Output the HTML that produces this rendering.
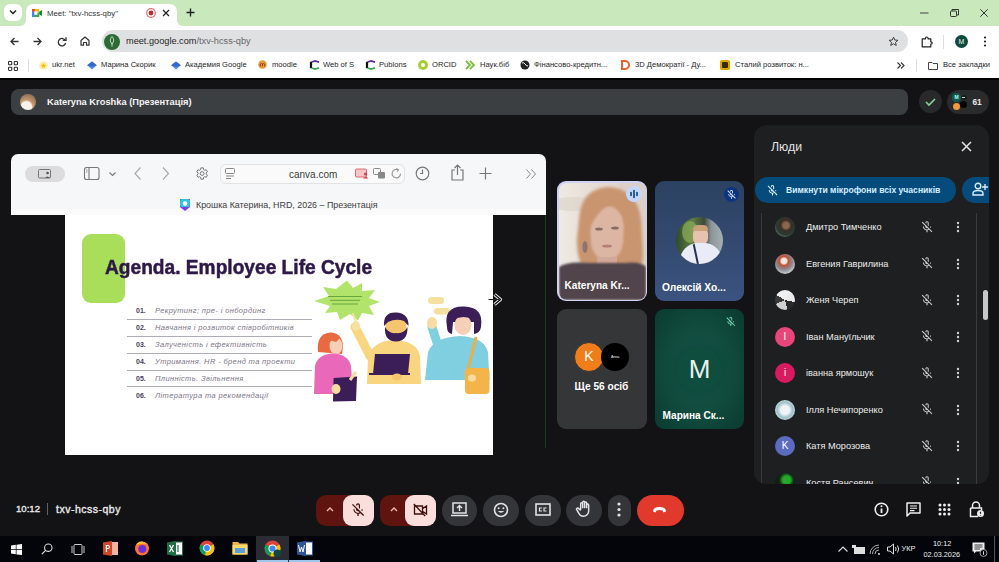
<!DOCTYPE html>
<html><head><meta charset="utf-8">
<style>
*{box-sizing:border-box;margin:0;padding:0}
html,body{width:999px;height:562px;overflow:hidden;background:#131316;font-family:"Liberation Sans",sans-serif}
.a{position:absolute}
svg{position:absolute;overflow:visible}
#tabs{left:0;top:0;width:999px;height:26px;background:#c9e8bc}
#toolbar{left:0;top:26px;width:999px;height:53px;background:#fff}
#meet{left:0;top:80px;width:999px;height:456px;background:#131316}
#taskbar{left:0;top:536px;width:999px;height:26px;background:#03050b}
.bm{position:absolute;top:60px;font-size:7.6px;color:#262626;white-space:nowrap;line-height:10px}
.ag{position:absolute;left:136px;font-size:7.5px;line-height:9px;white-space:nowrap;color:#7a7484}
.ag b{display:inline-block;width:19px;color:#4a3d5c;font-style:normal;font-size:7px}
.ag i{font-style:italic;letter-spacing:0.37px}
.av{position:absolute;left:21px;width:20px;height:20px;border-radius:50%;color:#fff;font-size:10px;text-align:center;line-height:20px}
.pn{position:absolute;left:52px;font-size:9.2px;color:#ededed;white-space:nowrap;line-height:12px}
.mo{left:165.5px}
.dt{left:202px}
.cb{position:absolute;top:494.5px;height:31px;background:#333538;border-radius:16px}
</style></head><body>
<!-- TAB STRIP -->
<div id="tabs" class="a"></div>
<div class="a" style="left:26px;top:4px;width:151px;height:24px;background:#fff;border-radius:7px 7px 0 0"></div>
<div class="a" style="left:20px;top:20px;width:6px;height:6px;background:#fff"></div>
<div class="a" style="left:14px;top:14px;width:12px;height:12px;background:#c9e8bc;border-radius:50%"></div>
<div class="a" style="left:177px;top:20px;width:6px;height:6px;background:#fff"></div>
<div class="a" style="left:177px;top:14px;width:12px;height:12px;background:#c9e8bc;border-radius:50%"></div>
<div class="a" style="left:4px;top:4px;width:18px;height:17px;background:#fff;border-radius:6px"></div>
<svg style="left:9px;top:9px" width="8" height="6"><path d="M1 1.5 L4 4.5 L7 1.5" stroke="#222" stroke-width="1.5" fill="none"/></svg>

<!-- meet icon -->
<svg style="left:31.5px;top:9px" width="10" height="8" viewBox="0 0 11 9">
<rect x="0" y="0" width="8" height="9" rx="1" fill="#fbbc04"/>
<rect x="0" y="4.5" width="8" height="4.5" fill="#34a853"/>
<rect x="0" y="0" width="2.5" height="9" fill="#4285f4"/>
<path d="M0 0 H3 V3 H0 Z" fill="#ea4335"/>
<rect x="2.5" y="2.5" width="3.5" height="4" fill="#fff"/>
<path d="M8 3 L11 1 V8 L8 6 Z" fill="#00832d"/>
</svg>
<div class="a" style="left:47px;top:7.5px;font-size:7.8px;color:#333;white-space:nowrap;line-height:11px">Meet: "txv-hcss-qby"</div>
<svg style="left:145px;top:7px" width="12" height="12"><circle cx="6" cy="6" r="4.3" fill="none" stroke="#e07070" stroke-width="1.2"/><circle cx="6" cy="6" r="2.4" fill="#b53030"/></svg>
<svg style="left:162px;top:9px" width="8" height="8"><path d="M1 1 L7 7 M7 1 L1 7" stroke="#222" stroke-width="1.3"/></svg>
<svg style="left:186px;top:8px" width="9" height="9"><path d="M4.5 0.5 V8.5 M0.5 4.5 H8.5" stroke="#222" stroke-width="1.4"/></svg>
<!-- window controls -->
<svg style="left:920px;top:12px" width="9" height="2"><path d="M0 1 H8.5" stroke="#444" stroke-width="1"/></svg>
<svg style="left:950px;top:9px" width="9" height="8"><rect x="0.5" y="2" width="6" height="5.5" rx="0.8" fill="none" stroke="#333" stroke-width="1"/><path d="M2 2 V0.5 H8.5 V6 H6.5" fill="none" stroke="#333" stroke-width="1"/></svg>
<svg style="left:980px;top:9px" width="8" height="8"><path d="M0.3 0.3 L7.7 7.7 M7.7 0.3 L0.3 7.7" stroke="#333" stroke-width="1"/></svg>

<!-- TOOLBAR -->
<div id="toolbar" class="a"></div>
<svg style="left:10px;top:37px" width="9" height="9"><path d="M8.5 4.5 H1.2 M4.5 1 L1 4.5 L4.5 8" stroke="#333" stroke-width="1.3" fill="none"/></svg>
<svg style="left:33px;top:37px" width="9" height="9"><path d="M0.5 4.5 H7.8 M4.5 1 L8 4.5 L4.5 8" stroke="#333" stroke-width="1.3" fill="none"/></svg>
<svg style="left:56.5px;top:36.5px" width="10" height="10"><path d="M8.3 3.5 A3.7 3.7 0 1 0 8.6 6" stroke="#333" stroke-width="1.3" fill="none"/><path d="M5.8 3.3 H9 V0.3" stroke="#333" stroke-width="1.3" fill="none"/></svg>
<svg style="left:80px;top:36px" width="10" height="10"><path d="M1 4.5 L5 1 L9 4.5 V9.2 H6.5 V6.5 H3.5 V9.2 H1 Z" stroke="#333" stroke-width="1.2" fill="none" stroke-linejoin="round"/></svg>
<div class="a" style="left:102px;top:30px;width:806px;height:22px;background:#dfe0e2;border-radius:11px"></div>
<div class="a" style="left:104px;top:33.5px;width:16px;height:16px;background:#2c6b35;border-radius:50%"></div>
<svg style="left:108px;top:36px" width="8" height="11"><path d="M4 0.5 C6 3 6.5 5 4 8 C1.5 5 2 3 4 0.5 Z M4 8 V10.5" stroke="#cfe6c6" stroke-width="1" fill="none"/></svg>
<div class="a" style="left:126px;top:36px;font-size:9.2px;color:#1f1f1f;white-space:nowrap;line-height:11px">meet.google.com<span style="color:#666">/txv-hcss-qby</span></div>
<svg style="left:888px;top:36px" width="11" height="11" viewBox="0 0 24 24"><path d="M12 2.5 L14.8 8.8 L21.6 9.4 L16.4 13.9 L18 20.6 L12 17 L6 20.6 L7.6 13.9 L2.4 9.4 L9.2 8.8 Z" fill="none" stroke="#333" stroke-width="2"/></svg>
<svg style="left:921px;top:35.5px" width="12" height="12" viewBox="0 0 12 12"><path d="M1.2 2.8 H4.5 Q4.5 1 5.8 1 Q7.1 1 7.1 2.8 H9.8 V5.8 Q11.2 5.8 11.2 7 Q11.2 8.2 9.8 8.2 V10.8 H1.2 Z" fill="none" stroke="#222" stroke-width="1.2" stroke-linejoin="round"/></svg>
<div class="a" style="left:943px;top:35px;width:1px;height:14px;background:#ddd"></div>
<div class="a" style="left:955px;top:35px;width:13px;height:13px;background:#0d4a3e;border-radius:50%;color:#e8f0ec;font-size:7px;text-align:center;line-height:13px">M</div>
<svg style="left:983px;top:36px" width="4" height="12"><circle cx="2" cy="1.5" r="1.1" fill="#222"/><circle cx="2" cy="5.5" r="1.1" fill="#222"/><circle cx="2" cy="9.5" r="1.1" fill="#222"/></svg>

<!-- BOOKMARKS -->
<svg style="left:8px;top:60.5px" width="10" height="10"><g fill="none" stroke="#333" stroke-width="1.1"><rect x="0.55" y="0.55" width="3.2" height="3.2" rx="0.6"/><rect x="6.25" y="0.55" width="3.2" height="3.2" rx="0.6"/><rect x="0.55" y="6.25" width="3.2" height="3.2" rx="0.6"/><rect x="6.25" y="6.25" width="3.2" height="3.2" rx="0.6"/></g></svg>
<div class="a" style="left:28px;top:59px;width:1px;height:13px;background:#ddd"></div>
<svg style="left:39px;top:60.5px" width="9" height="9"><circle cx="4.5" cy="4.5" r="4.3" fill="#fbeeb0"/><path d="M4.5 1.8 L5.3 3.8 L7.4 3.9 L5.8 5.2 L6.3 7.2 L4.5 6.1 L2.7 7.2 L3.2 5.2 L1.6 3.9 L3.7 3.8 Z" fill="#f2c200"/></svg>
<div class="bm" style="left:52px">ukr.net</div>
<svg style="left:87px;top:60.5px" width="10" height="9"><path d="M5 0.5 L9.8 4.3 L5 8.5 L0.2 4.3 Z" fill="#4a8cf0"/><path d="M0.2 4.3 L5 0.5 L9.8 4.3 L5 6 Z" fill="#356ac8"/></svg>
<div class="bm" style="left:101px">Марина Скорик</div>
<svg style="left:171px;top:60.5px" width="10" height="9"><path d="M5 0.5 L9.8 4.3 L5 8.5 L0.2 4.3 Z" fill="#4a8cf0"/><path d="M0.2 4.3 L5 0.5 L9.8 4.3 L5 6 Z" fill="#356ac8"/></svg>
<div class="bm" style="left:185px">Академия Google</div>
<svg style="left:258px;top:60px" width="9" height="9"><circle cx="4.5" cy="4.5" r="4.3" fill="#ee9a3a"/><path d="M2.3 6.5 V4 Q3.4 3 4.5 4 V6.5 M4.5 4 Q5.6 3 6.7 4 V6.5" stroke="#7a4010" stroke-width="0.9" fill="none"/></svg>
<div class="bm" style="left:272px">moodle</div>
<svg style="left:309px;top:60px" width="11" height="10" viewBox="0 0 11 10"><path d="M10 2.2 L6 0.9 L2.6 2" stroke="#5a2ca0" stroke-width="1.8" fill="none"/><path d="M2 1.8 V8.2" stroke="#111" stroke-width="2.2"/><path d="M2.6 8 L6 9.1 L10 7.8" stroke="#3aa84a" stroke-width="1.8" fill="none"/></svg>
<div class="bm" style="left:323px">Web of S</div>
<svg style="left:365px;top:60px" width="11" height="10" viewBox="0 0 11 10"><path d="M10 2.2 L6 0.9 L2.6 2" stroke="#5a2ca0" stroke-width="1.8" fill="none"/><path d="M2 1.8 V8.2" stroke="#111" stroke-width="2.2"/><path d="M2.6 8 L6 9.1 L10 7.8" stroke="#3aa84a" stroke-width="1.8" fill="none"/></svg>
<div class="bm" style="left:379px">Publons</div>
<div class="a" style="left:418px;top:60px;width:10px;height:10px;background:#a6ce39;border-radius:50%"></div>
<div class="a" style="left:421px;top:63px;width:4px;height:4px;background:#fff;border-radius:50%"></div>
<div class="bm" style="left:432px">ORCID</div>
<svg style="left:465px;top:60px" width="10" height="10"><path d="M1 1 L5 5 L1 9 M5 1 L9 5 L5 9" stroke="#7cc142" stroke-width="1.8" fill="none"/></svg>
<div class="bm" style="left:480px">Наук.біб</div>
<svg style="left:520px;top:60px" width="10" height="10"><circle cx="5" cy="5" r="4.5" fill="#222"/><path d="M2 3 Q4 2 5 4 T8 6" stroke="#fff" stroke-width="1" fill="none"/></svg>
<div class="bm" style="left:534px">Фінансово-кредитн...</div>
<svg style="left:620px;top:60px" width="10" height="10"><path d="M2 1 H5 A4 4 0 0 1 5 9 H2 Z" stroke="#e8622c" stroke-width="2" fill="none"/></svg>
<div class="bm" style="left:635px">3D Демократії - Ду...</div>
<div class="a" style="left:720px;top:60px;width:10px;height:10px;background:#d9a400;border-radius:2px"></div>
<div class="a" style="left:722px;top:62px;width:6px;height:6px;background:#3a2a00;border-radius:1px"></div>
<div class="bm" style="left:735px">Сталий розвиток: н...</div>
<svg style="left:897px;top:62px" width="8" height="7"><path d="M0.5 0.5 L3.5 3.5 L0.5 6.5 M4 0.5 L7 3.5 L4 6.5" stroke="#333" stroke-width="1.1" fill="none"/></svg>
<div class="a" style="left:916px;top:59px;width:1px;height:13px;background:#ddd"></div>
<svg style="left:928px;top:61px" width="10" height="9"><path d="M0.5 1.5 H4 L5 2.5 H9.5 V8.5 H0.5 Z" stroke="#444" stroke-width="1" fill="none"/></svg>
<div class="bm" style="left:943px">Все закладки</div>
<div class="a" style="left:0;top:78px;width:999px;height:2px;background:#000"></div>

<!-- MEET -->
<div id="meet" class="a"></div>

<!-- HEADER -->
<div class="a" style="left:11px;top:89px;width:897px;height:26px;background:#3c3f42;border-radius:8px"></div>
<div class="a" style="left:20px;top:94px;width:16px;height:16px;border-radius:50%;background:radial-gradient(circle at 40% 80%,#f6f2ee 0 32%,#c49a70 42%,#a07a58 70%,#7a6a60 100%)"></div>
<div class="a" style="left:47px;top:96px;font-size:9.3px;font-weight:bold;color:#f4f4f4;white-space:nowrap;line-height:12px">Kateryna Kroshka (Презентація)</div>
<div class="a" style="left:919px;top:90px;width:23px;height:23px;background:#28292b;border-radius:50%"></div>
<svg style="left:925px;top:97.5px" width="11" height="8"><path d="M1 4 L4 7 L10 1" stroke="#86d39a" stroke-width="1.6" fill="none"/></svg>
<div class="a" style="left:947px;top:89.5px;width:42px;height:24px;background:#2a2b2d;border-radius:12px"></div>
<div class="a" style="left:952px;top:93px;width:9px;height:9px;background:#0f5e50;border-radius:50%;font-size:5px;color:#bfe;text-align:center;line-height:9px;font-weight:bold">M</div>
<div class="a" style="left:960.5px;top:95px;width:6px;height:5px;background:#1b1c1e;border-radius:50%"></div>
<div class="a" style="left:962px;top:97px;width:3px;height:1px;background:#ccc"></div>
<div class="a" style="left:952.5px;top:102.5px;width:7px;height:7px;background:#f39a3e;border-radius:50%"></div>
<div class="a" style="left:960px;top:101px;width:7px;height:7px;background:#000;border-radius:50%"></div>
<div class="a" style="left:972.5px;top:96.5px;font-size:8.3px;font-weight:bold;color:#e8e8e8;line-height:10px">61</div>

<!-- CANVA WINDOW -->
<div class="a" style="left:11px;top:154px;width:535px;height:61px;background:#f6f7f9;border-radius:7px 7px 0 0"></div>
<div class="a" style="left:11px;top:209px;width:535px;height:6px;background:#fbfbfc"></div>
<div class="a" style="left:25px;top:166px;width:40px;height:16px;background:#dcdcde;border-radius:8px"></div>
<svg style="left:38px;top:169px" width="14" height="10"><rect x="0.5" y="0.5" width="12" height="8.5" rx="1" fill="none" stroke="#777" stroke-width="1"/><circle cx="9.5" cy="4" r="1.3" fill="#555"/><path d="M7 9 Q9.5 6 12 9" fill="#555"/></svg>
<svg style="left:84px;top:167px" width="16" height="13"><rect x="0.5" y="0.5" width="14.5" height="12" rx="2" fill="none" stroke="#777" stroke-width="1.1"/><path d="M5 0.5 V12.5" stroke="#777" stroke-width="1.1"/><path d="M2 3 H3.5 M2 5 H3.5" stroke="#777" stroke-width="0.8"/></svg>
<svg style="left:109px;top:172px" width="7" height="5"><path d="M0.5 0.5 L3.5 3.5 L6.5 0.5" stroke="#777" stroke-width="1.1" fill="none"/></svg>
<svg style="left:134px;top:167px" width="8" height="13"><path d="M6.5 0.5 L1 6.5 L6.5 12.5" stroke="#aaa" stroke-width="1.2" fill="none"/></svg>
<svg style="left:162px;top:167px" width="8" height="13"><path d="M1 0.5 L6.5 6.5 L1 12.5" stroke="#aaa" stroke-width="1.2" fill="none"/></svg>
<svg style="left:194px;top:166px" width="15" height="15" viewBox="0 0 24 24"><path d="M19.4 13a7.5 7.5 0 0 0 0-2l2.1-1.6-2-3.5-2.5 1a7.6 7.6 0 0 0-1.7-1L15 3h-4l-.4 2.9a7.6 7.6 0 0 0-1.7 1l-2.5-1-2 3.5L6.6 11a7.5 7.5 0 0 0 0 2l-2.1 1.6 2 3.5 2.5-1a7.6 7.6 0 0 0 1.7 1L11 21h4l.4-2.9a7.6 7.6 0 0 0 1.7-1l2.5 1 2-3.5z" fill="none" stroke="#777" stroke-width="1.6"/><circle cx="13" cy="12" r="3" fill="none" stroke="#777" stroke-width="1.6"/></svg>
<div class="a" style="left:220px;top:164px;width:185px;height:20px;background:#fafafb;border:1px solid #e2e3e6;border-radius:6px"></div>
<svg style="left:225px;top:168px" width="10" height="12"><rect x="0.5" y="0.5" width="9" height="5" rx="1" fill="none" stroke="#888" stroke-width="1"/><path d="M1 8 H9 M1 10.5 H6" stroke="#888" stroke-width="1"/></svg>
<div class="a" style="left:289px;top:169px;font-size:10px;color:#3c3c3c;line-height:11px;white-space:nowrap">canva.com</div>
<svg style="left:355px;top:168px" width="15" height="11"><rect x="0.5" y="1" width="11" height="8" rx="1" fill="#f6c6c8" stroke="#e06a70" stroke-width="1"/><circle cx="10.5" cy="6" r="1.6" fill="#d9434b"/><path d="M8 10.5 Q10.5 7 13.5 10.5 Z" fill="#d9434b"/></svg>
<svg style="left:373px;top:168px" width="13" height="12"><rect x="0.5" y="0.5" width="7" height="6" rx="1" fill="none" stroke="#888" stroke-width="1"/><rect x="5" y="4" width="7" height="6.5" rx="1" fill="#888"/></svg>
<svg style="left:391px;top:168px" width="11" height="12"><path d="M9.5 5.5 A4.2 4.2 0 1 1 7 1.8" stroke="#999" stroke-width="1.1" fill="none"/><path d="M5.5 0.5 L7.5 1.8 L6 3.6" stroke="#999" stroke-width="1.1" fill="none"/></svg>
<svg style="left:415px;top:166px" width="15" height="15"><circle cx="7.5" cy="7.5" r="6.3" fill="none" stroke="#777" stroke-width="1.2"/><path d="M7.5 3.5 V7.5 H5" stroke="#777" stroke-width="1.2" fill="none"/></svg>
<svg style="left:451px;top:164px" width="13" height="17"><path d="M4 6 H1 V16 H12 V6 H9 M6.5 11 V1 M3.5 4 L6.5 1 L9.5 4" stroke="#777" stroke-width="1.2" fill="none"/></svg>
<svg style="left:479px;top:167px" width="13" height="13"><path d="M6.5 0.5 V12.5 M0.5 6.5 H12.5" stroke="#777" stroke-width="1.2"/></svg>
<svg style="left:526px;top:169px" width="11" height="10"><path d="M0.5 0.5 L4.5 5 L0.5 9.5 M5.5 0.5 L9.5 5 L5.5 9.5" stroke="#888" stroke-width="1" fill="none"/></svg>
<svg style="left:179px;top:198px" width="12" height="14"><path d="M1 1 H11 V9 L6 13 L1 9 Z" fill="#7b3fe4"/><rect x="1" y="1" width="10" height="8" rx="2" fill="#35c3d9"/><circle cx="6" cy="5.5" r="2.3" fill="#fff"/></svg>
<div class="a" style="left:196px;top:199.5px;font-size:8.9px;color:#404040;line-height:10px;white-space:nowrap">Крошка Катерина, HRD, 2026 – Презентація</div>
<div class="a" style="left:545px;top:215px;width:1px;height:233px;background:#1d3a22"></div>


<!-- TILES -->
<div class="a" style="left:557px;top:181px;width:90px;height:120px;border-radius:9px;background:#cfd2f4;padding:1.5px">
 <div style="position:relative;width:100%;height:100%;border-radius:8px;overflow:hidden;background:linear-gradient(90deg,#efeae4 0%,#e6dcd4 40%,#d9cbc4 100%)">
  <div class="a" style="left:-10px;top:14px;width:50px;height:14px;border-radius:50%;background:#d9d2c8;opacity:.6"></div>
  <svg style="left:0;top:0" width="87" height="117" viewBox="0 0 87 117">
   <defs><filter id="bl1"><feGaussianBlur stdDeviation="1.8"/></filter><filter id="bl2"><feGaussianBlur stdDeviation="0.8"/></filter></defs>
   <rect x="60" y="0" width="27" height="90" fill="#dccfc8"/>
   <path d="M20 36 Q22 5 50 4 Q78 6 82 36 L84 70 Q84 82 80 86 L64 84 L36 84 L22 82 Q17 68 18 55 Z" fill="#c9956f" filter="url(#bl1)"/>
   <path d="M31 42 Q32 24 48 23 Q64 24 65 42 L64 60 Q62 76 48 77 Q34 76 32 60 Z" fill="#ddb6a3" filter="url(#bl2)"/>
   <path d="M26 30 Q38 12 62 18 Q50 20 42 28 Q34 36 30 48 Z" fill="#c9956f" filter="url(#bl2)"/>
   <path d="M60 20 Q70 28 68 46 L65 40 Q64 30 56 24 Z" fill="#c9956f" filter="url(#bl2)"/>
   <ellipse cx="40" cy="46" rx="3.8" ry="1.5" fill="#6e5250" opacity=".75"/>
   <ellipse cx="56" cy="45" rx="3.8" ry="1.5" fill="#6e5250" opacity=".75"/>
   <ellipse cx="48" cy="63" rx="5" ry="1.6" fill="#a86e6a" opacity=".75"/>
   <path d="M38 74 H58 V86 H38 Z" fill="#d2a998"/>
   <ellipse cx="26" cy="64" rx="2.6" ry="6" fill="#7a6a70" opacity=".75"/>
   <path d="M0 84 Q8 78 30 80 L66 80 Q82 78 87 84 V117 H0 Z" fill="#51454b" filter="url(#bl2)"/>
  </svg>
  <div class="a" style="left:6px;top:97px;font-size:10.1px;font-weight:bold;color:#fff;white-space:nowrap;line-height:12px">Kateryna Kr...</div>
 </div>
</div>
<div class="a" style="left:625.5px;top:186px;width:16px;height:16px;border-radius:50%;background:#c4d7fb"></div>
<svg style="left:628.5px;top:189px" width="10" height="10"><path d="M2 3.5 V6.5 M5 1.5 V8.5 M8 3.5 V6.5" stroke="#0b3f8f" stroke-width="1.6" stroke-linecap="round"/></svg>

<div class="a" style="left:655px;top:181px;width:89px;height:120px;border-radius:9px;background:linear-gradient(180deg,#2c4262 0%,#33496f 50%,#3a5380 100%)"></div>
<div class="a" style="left:723.5px;top:186.5px;width:15px;height:15px;border-radius:50%;background:#0b3580"></div>
<svg style="left:725.5px;top:188.5px" width="11" height="11" viewBox="0 0 24 24"><path d="M10.8 4.9c0-.66.54-1.2 1.2-1.2s1.2.54 1.2 1.2l-.01 3.91L15 10.6V5c0-1.66-1.34-3-3-3-1.54 0-2.79 1.16-2.96 2.65l1.76 1.76V4.9zM19 11h-1.7c0 .58-.1 1.130-.27 1.64l1.27 1.27c.44-.88.7-1.870.7-2.91zM4.41 2.86L3 4.27l6 6V11c0 1.66 1.34 3 3 3 .23 0 .44-.03.65-.08l1.66 1.66c-.71.33-1.5.52-2.31.52-2.76 0-5.3-2.1-5.3-5.1H5c0 3.41 2.72 6.230 6 6.72V21h2v-3.28c.91-.13 1.77-.45 2.55-.9l4.2 4.2 1.41-1.41L4.41 2.86z" fill="#dfe8ff"/></svg>
<div class="a" style="left:676px;top:216.5px;width:47px;height:47px;border-radius:50%;overflow:hidden;background:linear-gradient(90deg,#2f4a2a 0%,#5d7d45 35%,#3c4a3a 60%,#8c959a 75%,#a7b0b4 100%)">
  <div class="a" style="left:6px;top:4px;width:16px;height:22px;border-radius:50%;background:#8fae5a;opacity:.7"></div>
  <div class="a" style="left:17px;top:10px;width:15px;height:19px;border-radius:7px 7px 8px 8px;background:#e7c2ae"></div>
  <div class="a" style="left:17px;top:8px;width:15px;height:6px;border-radius:7px 7px 2px 2px;background:#c9a27a"></div>
  <div class="a" style="left:4px;top:26px;width:42px;height:30px;border-radius:18px 18px 0 0;background:#e9ecf6"></div>
  <div class="a" style="left:19px;top:27px;width:2px;height:22px;background:#2a3050;transform:rotate(-12deg)"></div>
</div>
<div class="a" style="left:662px;top:282px;font-size:10.2px;font-weight:bold;color:#fff;white-space:nowrap;line-height:12px">Олексій Хо...</div>

<div class="a" style="left:557px;top:309px;width:90px;height:120px;border-radius:9px;background:#353638"></div>
<div class="a" style="left:574px;top:342px;width:30px;height:30px;border-radius:50%;background:#f07d1a;border:1.5px solid #353638;color:#fff;font-size:14px;text-align:center;line-height:27px">K</div>
<div class="a" style="left:601px;top:343px;width:28px;height:28px;border-radius:50%;background:#000;color:#fff;font-size:3.5px;text-align:center;line-height:28px">Anna</div>
<div class="a" style="left:574.5px;top:381px;font-size:10.2px;font-weight:bold;color:#fff;white-space:nowrap;line-height:12px">Ще 56 осіб</div>

<div class="a" style="left:655px;top:309px;width:89px;height:120px;border-radius:9px;background:radial-gradient(ellipse at 50% 50%,#17584a 0%,#104a3d 55%,#0b3a30 100%)"></div>
<div class="a" style="left:677px;top:347px;width:45px;height:45px;border-radius:50%;background:#0f4d3f;box-shadow:0 0 6px 3px rgba(12,70,58,.6);color:#e8f3ee;font-size:26px;text-align:center;line-height:45px">M</div>
<svg style="left:725px;top:315.5px" width="11.5" height="11.5" viewBox="0 0 24 24"><path d="M10.8 4.9c0-.66.54-1.2 1.2-1.2s1.2.54 1.2 1.2l-.01 3.91L15 10.6V5c0-1.66-1.34-3-3-3-1.54 0-2.79 1.16-2.96 2.65l1.76 1.76V4.9zM19 11h-1.7c0 .58-.1 1.130-.27 1.64l1.27 1.27c.44-.88.7-1.870.7-2.91zM4.41 2.86L3 4.27l6 6V11c0 1.66 1.34 3 3 3 .23 0 .44-.03.65-.08l1.66 1.66c-.71.33-1.5.52-2.31.52-2.76 0-5.3-2.1-5.3-5.1H5c0 3.41 2.72 6.230 6 6.72V21h2v-3.28c.91-.13 1.77-.45 2.55-.9l4.2 4.2 1.41-1.41L4.41 2.86z" fill="#7fd6b4"/></svg>
<div class="a" style="left:662.5px;top:410px;font-size:10.1px;font-weight:bold;color:#fff;white-space:nowrap;line-height:12px">Марина Ск...</div>


<!-- PEOPLE PANEL -->
<div class="a" style="left:754px;top:125px;width:235px;height:359px;background:#1e1f20;border-radius:13px 13px 12px 12px;overflow:hidden">
<div class="a" style="left:17px;top:15px;font-size:12.3px;color:#e3e3e3;line-height:15px">Люди</div>
<svg style="left:207px;top:16px" width="11" height="11"><path d="M1 1 L10 10 M10 1 L1 10" stroke="#e3e3e3" stroke-width="1.5"/></svg>
<div class="a" style="left:0.5px;top:52px;width:201.5px;height:25.5px;background:#054c7c;border-radius:13px"></div>
<svg style="left:12px;top:58.5px" width="13" height="13" viewBox="0 0 24 24"><path d="M10.8 4.9c0-.66.54-1.2 1.2-1.2s1.2.54 1.2 1.2l-.01 3.91L15 10.6V5c0-1.66-1.34-3-3-3-1.54 0-2.79 1.16-2.96 2.65l1.76 1.76V4.9zM19 11h-1.7c0 .58-.1 1.130-.27 1.64l1.27 1.27c.44-.88.7-1.870.7-2.91zM4.41 2.86L3 4.27l6 6V11c0 1.66 1.34 3 3 3 .23 0 .44-.03.65-.08l1.66 1.66c-.71.33-1.5.52-2.31.52-2.76 0-5.3-2.1-5.3-5.1H5c0 3.41 2.72 6.230 6 6.72V21h2v-3.28c.91-.13 1.77-.45 2.55-.9l4.2 4.2 1.41-1.41L4.41 2.86z" fill="#d6ecff"/></svg>
<div class="a" style="left:32px;top:59.5px;font-size:8.6px;font-weight:bold;color:#d6ecff;white-space:nowrap;line-height:11px">Вимкнути мікрофони всіх учасників</div>
<div class="a" style="left:208px;top:52px;width:40px;height:25.5px;background:#054c7c;border-radius:13px"></div>
<svg style="left:218px;top:57px" width="16" height="14" viewBox="0 0 16 14"><circle cx="6" cy="4" r="2.8" fill="none" stroke="#d6ecff" stroke-width="1.4"/><path d="M1 13 V11.5 Q1 8.5 6 8.5 Q11 8.5 11 11.5 V13 Z" fill="none" stroke="#d6ecff" stroke-width="1.4"/><path d="M13 2 V8 M10 5 H16" stroke="#d6ecff" stroke-width="1.4"/></svg>
<div class="a" style="left:7px;top:88px;width:216px;height:290px;border-left:1px solid #3a3b3d;border-right:1px solid #3a3b3d"></div>
<div class="a" style="left:229px;top:165px;width:5px;height:30px;background:#c7c7c7;border-radius:3px"></div>
<div class="av" style="top:92.0px;background:radial-gradient(circle at 55% 42%,#8a6650 0 18%,#3a2c26 34%,#2c3a34 60%,#6e9a8a 85%,#9ab8aa 100%)"></div><div class="pn" style="top:96.0px">Дмитро Тимченко</div><svg class="mo" style="top:94.5px" width="14" height="14" viewBox="0 0 24 24"><path d="M10.8 4.9c0-.66.54-1.2 1.2-1.2s1.2.54 1.2 1.2l-.01 3.91L15 10.6V5c0-1.66-1.34-3-3-3-1.54 0-2.79 1.16-2.96 2.65l1.76 1.76V4.9zM19 11h-1.7c0 .58-.1 1.130-.27 1.64l1.27 1.27c.44-.88.7-1.870.7-2.91zM4.41 2.86L3 4.27l6 6V11c0 1.66 1.34 3 3 3 .23 0 .44-.03.65-.08l1.66 1.66c-.71.33-1.5.52-2.31.52-2.76 0-5.3-2.1-5.3-5.1H5c0 3.41 2.72 6.230 6 6.72V21h2v-3.28c.91-.13 1.77-.45 2.55-.9l4.2 4.2 1.41-1.41L4.41 2.86z" fill="#c8c8c8"/></svg><svg class="dt" style="top:96.0px" width="4" height="12"><circle cx="2" cy="2" r="1.2" fill="#d0d0d0"/><circle cx="2" cy="6" r="1.2" fill="#d0d0d0"/><circle cx="2" cy="10" r="1.2" fill="#d0d0d0"/></svg>
<div class="av" style="top:128.6px;background:radial-gradient(circle at 45% 35%,#f0e6dc 0 16%,#c0503a 26%,#8a8f96 52%,#d8d8d8 80%,#3a3a3c 100%)"></div><div class="pn" style="top:132.6px">Евгения Гаврилина</div><svg class="mo" style="top:131.1px" width="14" height="14" viewBox="0 0 24 24"><path d="M10.8 4.9c0-.66.54-1.2 1.2-1.2s1.2.54 1.2 1.2l-.01 3.91L15 10.6V5c0-1.66-1.34-3-3-3-1.54 0-2.79 1.16-2.96 2.65l1.76 1.76V4.9zM19 11h-1.7c0 .58-.1 1.130-.27 1.64l1.27 1.27c.44-.88.7-1.870.7-2.91zM4.41 2.86L3 4.27l6 6V11c0 1.66 1.34 3 3 3 .23 0 .44-.03.65-.08l1.66 1.66c-.71.33-1.5.52-2.31.52-2.76 0-5.3-2.1-5.3-5.1H5c0 3.41 2.72 6.230 6 6.72V21h2v-3.28c.91-.13 1.77-.45 2.55-.9l4.2 4.2 1.41-1.41L4.41 2.86z" fill="#c8c8c8"/></svg><svg class="dt" style="top:132.6px" width="4" height="12"><circle cx="2" cy="2" r="1.2" fill="#d0d0d0"/><circle cx="2" cy="6" r="1.2" fill="#d0d0d0"/><circle cx="2" cy="10" r="1.2" fill="#d0d0d0"/></svg>
<div class="av" style="top:165.1px;background:conic-gradient(from 30deg,#eaeaea 0 20%,#2a2a2a 20% 38%,#d0d0d0 38% 60%,#3a3a3a 60% 75%,#f0f0f0 75%)"></div><div class="pn" style="top:169.1px">Женя Череп</div><svg class="mo" style="top:167.6px" width="14" height="14" viewBox="0 0 24 24"><path d="M10.8 4.9c0-.66.54-1.2 1.2-1.2s1.2.54 1.2 1.2l-.01 3.91L15 10.6V5c0-1.66-1.34-3-3-3-1.54 0-2.79 1.16-2.96 2.65l1.76 1.76V4.9zM19 11h-1.7c0 .58-.1 1.130-.27 1.64l1.27 1.27c.44-.88.7-1.870.7-2.91zM4.41 2.86L3 4.27l6 6V11c0 1.66 1.34 3 3 3 .23 0 .44-.03.65-.08l1.66 1.66c-.71.33-1.5.52-2.31.52-2.76 0-5.3-2.1-5.3-5.1H5c0 3.41 2.72 6.230 6 6.72V21h2v-3.28c.91-.13 1.77-.45 2.55-.9l4.2 4.2 1.41-1.41L4.41 2.86z" fill="#c8c8c8"/></svg><svg class="dt" style="top:169.1px" width="4" height="12"><circle cx="2" cy="2" r="1.2" fill="#d0d0d0"/><circle cx="2" cy="6" r="1.2" fill="#d0d0d0"/><circle cx="2" cy="10" r="1.2" fill="#d0d0d0"/></svg>
<div class="av" style="top:201.6px;background:#e8457a">I</div><div class="pn" style="top:205.6px">Іван Мануїльчик</div><svg class="mo" style="top:204.1px" width="14" height="14" viewBox="0 0 24 24"><path d="M10.8 4.9c0-.66.54-1.2 1.2-1.2s1.2.54 1.2 1.2l-.01 3.91L15 10.6V5c0-1.66-1.34-3-3-3-1.54 0-2.79 1.16-2.96 2.65l1.76 1.76V4.9zM19 11h-1.7c0 .58-.1 1.130-.27 1.64l1.27 1.27c.44-.88.7-1.870.7-2.91zM4.41 2.86L3 4.27l6 6V11c0 1.66 1.34 3 3 3 .23 0 .44-.03.65-.08l1.66 1.66c-.71.33-1.5.52-2.31.52-2.76 0-5.3-2.1-5.3-5.1H5c0 3.41 2.72 6.230 6 6.72V21h2v-3.28c.91-.13 1.77-.45 2.55-.9l4.2 4.2 1.41-1.41L4.41 2.86z" fill="#c8c8c8"/></svg><svg class="dt" style="top:205.6px" width="4" height="12"><circle cx="2" cy="2" r="1.2" fill="#d0d0d0"/><circle cx="2" cy="6" r="1.2" fill="#d0d0d0"/><circle cx="2" cy="10" r="1.2" fill="#d0d0d0"/></svg>
<div class="av" style="top:238.2px;background:#d81b60">i</div><div class="pn" style="top:242.2px">іванна ярмошук</div><svg class="mo" style="top:240.7px" width="14" height="14" viewBox="0 0 24 24"><path d="M10.8 4.9c0-.66.54-1.2 1.2-1.2s1.2.54 1.2 1.2l-.01 3.91L15 10.6V5c0-1.66-1.34-3-3-3-1.54 0-2.79 1.16-2.96 2.65l1.76 1.76V4.9zM19 11h-1.7c0 .58-.1 1.130-.27 1.64l1.27 1.27c.44-.88.7-1.870.7-2.91zM4.41 2.86L3 4.27l6 6V11c0 1.66 1.34 3 3 3 .23 0 .44-.03.65-.08l1.66 1.66c-.71.33-1.5.52-2.31.52-2.76 0-5.3-2.1-5.3-5.1H5c0 3.41 2.72 6.230 6 6.72V21h2v-3.28c.91-.13 1.77-.45 2.55-.9l4.2 4.2 1.41-1.41L4.41 2.86z" fill="#c8c8c8"/></svg><svg class="dt" style="top:242.2px" width="4" height="12"><circle cx="2" cy="2" r="1.2" fill="#d0d0d0"/><circle cx="2" cy="6" r="1.2" fill="#d0d0d0"/><circle cx="2" cy="10" r="1.2" fill="#d0d0d0"/></svg>
<div class="av" style="top:274.8px;background:radial-gradient(circle at 50% 50%,#f0f4f6 0 30%,#9cc0c8 55%,#dfe8ea 80%,#b8cdd2 100%)"></div><div class="pn" style="top:278.8px">Ілля Нечипоренко</div><svg class="mo" style="top:277.3px" width="14" height="14" viewBox="0 0 24 24"><path d="M10.8 4.9c0-.66.54-1.2 1.2-1.2s1.2.54 1.2 1.2l-.01 3.91L15 10.6V5c0-1.66-1.34-3-3-3-1.54 0-2.79 1.16-2.96 2.65l1.76 1.76V4.9zM19 11h-1.7c0 .58-.1 1.130-.27 1.64l1.27 1.27c.44-.88.7-1.870.7-2.91zM4.41 2.86L3 4.27l6 6V11c0 1.66 1.34 3 3 3 .23 0 .44-.03.65-.08l1.66 1.66c-.71.33-1.5.52-2.31.52-2.76 0-5.3-2.1-5.3-5.1H5c0 3.41 2.72 6.230 6 6.72V21h2v-3.28c.91-.13 1.77-.45 2.55-.9l4.2 4.2 1.41-1.41L4.41 2.86z" fill="#c8c8c8"/></svg><svg class="dt" style="top:278.8px" width="4" height="12"><circle cx="2" cy="2" r="1.2" fill="#d0d0d0"/><circle cx="2" cy="6" r="1.2" fill="#d0d0d0"/><circle cx="2" cy="10" r="1.2" fill="#d0d0d0"/></svg>
<div class="av" style="top:311.3px;background:#5c6bc0">K</div><div class="pn" style="top:315.3px">Катя Морозова</div><svg class="mo" style="top:313.8px" width="14" height="14" viewBox="0 0 24 24"><path d="M10.8 4.9c0-.66.54-1.2 1.2-1.2s1.2.54 1.2 1.2l-.01 3.91L15 10.6V5c0-1.66-1.34-3-3-3-1.54 0-2.79 1.16-2.96 2.65l1.76 1.76V4.9zM19 11h-1.7c0 .58-.1 1.130-.27 1.64l1.27 1.27c.44-.88.7-1.870.7-2.91zM4.41 2.86L3 4.27l6 6V11c0 1.66 1.34 3 3 3 .23 0 .44-.03.65-.08l1.66 1.66c-.71.33-1.5.52-2.31.52-2.76 0-5.3-2.1-5.3-5.1H5c0 3.41 2.72 6.230 6 6.72V21h2v-3.28c.91-.13 1.77-.45 2.55-.9l4.2 4.2 1.41-1.41L4.41 2.86z" fill="#c8c8c8"/></svg><svg class="dt" style="top:315.3px" width="4" height="12"><circle cx="2" cy="2" r="1.2" fill="#d0d0d0"/><circle cx="2" cy="6" r="1.2" fill="#d0d0d0"/><circle cx="2" cy="10" r="1.2" fill="#d0d0d0"/></svg>
<div class="av" style="top:347.8px;background:radial-gradient(circle at 58% 35%,#26a82c 0 22%,#0b2a0c 42%,#151515 70%)"></div><div class="pn" style="top:351.8px">Костя Рансевич</div><svg class="mo" style="top:350.3px" width="14" height="14" viewBox="0 0 24 24"><path d="M10.8 4.9c0-.66.54-1.2 1.2-1.2s1.2.54 1.2 1.2l-.01 3.91L15 10.6V5c0-1.66-1.34-3-3-3-1.54 0-2.79 1.16-2.96 2.65l1.76 1.76V4.9zM19 11h-1.7c0 .58-.1 1.130-.27 1.64l1.27 1.27c.44-.88.7-1.870.7-2.91zM4.41 2.86L3 4.27l6 6V11c0 1.66 1.34 3 3 3 .23 0 .44-.03.65-.08l1.66 1.66c-.71.33-1.5.52-2.31.52-2.76 0-5.3-2.1-5.3-5.1H5c0 3.41 2.72 6.230 6 6.72V21h2v-3.28c.91-.13 1.77-.45 2.55-.9l4.2 4.2 1.41-1.41L4.41 2.86z" fill="#c8c8c8"/></svg><svg class="dt" style="top:351.8px" width="4" height="12"><circle cx="2" cy="2" r="1.2" fill="#d0d0d0"/><circle cx="2" cy="6" r="1.2" fill="#d0d0d0"/><circle cx="2" cy="10" r="1.2" fill="#d0d0d0"/></svg>
</div>

<!-- SLIDE -->
<div class="a" style="left:65px;top:215px;width:428px;height:240px;background:#fff"></div>

<div class="a" style="left:82px;top:234px;width:43px;height:69px;background:#a9de5b;border-radius:9px"></div>
<div class="a" style="left:104.5px;top:255.5px;font-size:20.5px;font-weight:bold;color:#2e1848;line-height:22px;white-space:nowrap;transform:scaleX(0.934);transform-origin:0 0;-webkit-text-stroke:0.5px #2e1848">Agenda. Employee Life Cycle</div>
<div class="a" style="left:127px;top:319px;width:185px;height:1px;background:#aeacb6"></div>
<div class="a" style="left:127px;top:336px;width:185px;height:1px;background:#aeacb6"></div>
<div class="a" style="left:127px;top:353px;width:185px;height:1px;background:#aeacb6"></div>
<div class="a" style="left:127px;top:370px;width:185px;height:1px;background:#aeacb6"></div>
<div class="a" style="left:127px;top:386px;width:185px;height:1px;background:#aeacb6"></div>
<div class="ag" style="top:306px"><b>01.</b><i>Рекрутинг; пре- і онбординг</i></div>
<div class="ag" style="top:323px"><b>02.</b><i>Навчання і розвиток співробітників</i></div>
<div class="ag" style="top:340px"><b>03.</b><i>Залученість і ефективність</i></div>
<div class="ag" style="top:357px"><b>04.</b><i>Утримання. HR - бренд та проекти</i></div>
<div class="ag" style="top:374px"><b>05.</b><i>Плинність. Звільнення</i></div>
<div class="ag" style="top:391px"><b>06.</b><i>Література та рекомендації</i></div>
<!-- illustration -->
<svg style="left:300px;top:270px" width="200" height="140" viewBox="300 270 200 140">
<path d="M347 280.5 L353 288 L362 283 L362 291 L375 290 L369 298 L380 302 L369 306 L374 315 L362 313 L358 320.5 L350 314 L340 320 L337 312 L325 313 L330 306 L314 301 L329 296 L323 287 L336 289 Z" fill="#b2e46c"/>
<path d="M328 296.5 H362 M330 300.3 H360 M332 304 H358" stroke="#5f9e3a" stroke-width="0.9"/>
<rect x="428" y="297" width="16" height="7" rx="3.5" fill="#f6e0a0"/>
<rect x="434" y="308" width="16" height="6.5" rx="3.2" fill="#f6e0a0"/>
<!-- left woman -->
<path d="M318 352 Q316 334 330 332.5 Q343 333 343 347 L342 354 Z" fill="#e96a40"/>
<ellipse cx="336" cy="346" rx="6.5" ry="8.5" fill="#f5cfb8"/>
<path d="M322 340 Q330 332 340 338 L336 342 Q328 338 322 344 Z" fill="#e96a40"/>
<path d="M314 394 L315 366 Q318 354 333 353.5 Q348 354 351 366 L353 394 Z" fill="#e968b9"/>
<path d="M333.6 378 L357 376.5 L356 401 L333 401.5 Z" fill="#3b1d57"/>
<ellipse cx="336" cy="389" rx="4.5" ry="5" fill="#f6dca0"/>
<path d="M350 380 L356 372" stroke="#f6dca0" stroke-width="3"/>
<!-- bearded man -->
<path d="M367 384 L368 358 Q372 341 394 340 Q417 341 420 356 L421 384 Z" fill="#f8d57e"/>
<path d="M370 356 L355 327" stroke="#f8d57e" stroke-width="9" stroke-linecap="round"/>
<ellipse cx="356" cy="326" rx="4" ry="5" fill="#f8e1a0"/>
<path d="M356 322 L353 314" stroke="#f8e1a0" stroke-width="2" stroke-linecap="round"/>
<ellipse cx="396" cy="327" rx="10.5" ry="12" fill="#f5c46e"/>
<path d="M384 326 Q383 312 396 312.5 Q409 313 408.5 326 L404 321 Q396 318 388 322 Z" fill="#3b1d57"/>
<path d="M385 327 Q384 341 396 341.5 Q408 341 407.5 327 Q404 334 396 333 Q389 334 385 327 Z" fill="#3b1d57"/>
<path d="M375 354 L410 354 L408 374 L373 374 Z" fill="#3b1d57"/>
<path d="M369 374 L410 374" stroke="#3b1d57" stroke-width="2"/>
<ellipse cx="397" cy="377" rx="5" ry="3.5" fill="#f5c46e"/>
<!-- right woman -->
<path d="M425 380 L428 352 Q434 337 460 336 Q484 337 488 352 L489.5 380 Z" fill="#7fcfe0"/>
<path d="M440 352 L432 327" stroke="#7fcfe0" stroke-width="9" stroke-linecap="round"/>
<ellipse cx="432" cy="323" rx="5" ry="6" fill="#f6dca0"/>
<path d="M447 327 Q443 306 464 306.5 Q484 307 481 327 Q480 333 474 334 L474 322 L453 322 L452 334 Q447 333 447 327 Z" fill="#3b1d57"/>
<ellipse cx="463" cy="325" rx="8.5" ry="10" fill="#f5cfb8"/>
<path d="M453 320 Q456 309 466 311 Q474 312 474 320 Q464 314 453 320 Z" fill="#3b1d57"/>
<path d="M476 337 L468 370" stroke="#e8b04a" stroke-width="3"/>
<rect x="465" y="368" width="24.5" height="26" rx="4" fill="#f3b54a"/>
<ellipse cx="472" cy="378" rx="4" ry="3.5" fill="#f6dca0"/>
</svg>
<svg style="left:486px;top:291px" width="18" height="17"><path d="M8.5 3.5 L14.5 8.5 L8.5 13.5" stroke="#e8e8e8" stroke-width="3.2" fill="none" stroke-linejoin="round"/><path d="M8.5 3.5 L14.5 8.5 L8.5 13.5" stroke="#111" stroke-width="1.2" fill="none" stroke-linejoin="round"/><path d="M2.5 8.5 H13.5" stroke="#222" stroke-width="1.1"/></svg>

<!-- BOTTOM BAR -->
<div class="a" style="left:16px;top:502.5px;font-size:9.6px;color:#eaeaea;line-height:12px;-webkit-text-stroke:0.35px #eaeaea">10:12</div>
<div class="a" style="left:47px;top:503px;width:1px;height:12px;background:#5f6368"></div>
<div class="a" style="left:56px;top:502.5px;font-size:10.5px;color:#eaeaea;line-height:12px;white-space:nowrap;letter-spacing:0.5px;-webkit-text-stroke:0.35px #eaeaea">txv-hcss-qby</div>

<div class="a" style="left:316px;top:494.5px;width:40px;height:31px;background:#601410;border-radius:10px 0 0 10px"></div>
<div class="a" style="left:342.5px;top:494.5px;width:31.5px;height:31px;background:#f9dedc;border-radius:9px"></div>
<svg style="left:326px;top:507px" width="8" height="5"><path d="M1 4 L4 1 L7 4" stroke="#f2b8b5" stroke-width="1.4" fill="none"/></svg>
<svg style="left:350px;top:502px" width="16" height="16" viewBox="0 0 24 24"><path d="M10.8 4.9c0-.66.54-1.2 1.2-1.2s1.2.54 1.2 1.2l-.01 3.91L15 10.6V5c0-1.66-1.34-3-3-3-1.54 0-2.79 1.16-2.96 2.65l1.76 1.76V4.9zM19 11h-1.7c0 .58-.1 1.130-.27 1.64l1.27 1.27c.44-.88.7-1.870.7-2.91zM4.41 2.86L3 4.27l6 6V11c0 1.66 1.34 3 3 3 .23 0 .44-.03.65-.08l1.66 1.66c-.71.33-1.5.52-2.31.52-2.76 0-5.3-2.1-5.3-5.1H5c0 3.41 2.72 6.230 6 6.72V21h2v-3.28c.91-.13 1.77-.45 2.55-.9l4.2 4.2 1.41-1.41L4.41 2.86z" fill="#410e0b"/></svg>

<div class="a" style="left:379.5px;top:494.5px;width:40px;height:31px;background:#601410;border-radius:10px 0 0 10px"></div>
<div class="a" style="left:405px;top:494.5px;width:31px;height:31px;background:#f9dedc;border-radius:9px"></div>
<svg style="left:389.5px;top:507px" width="8" height="5"><path d="M1 4 L4 1 L7 4" stroke="#f2b8b5" stroke-width="1.4" fill="none"/></svg>
<svg style="left:412px;top:502px" width="17" height="16" viewBox="0 0 24 24"><path d="M3 6 H15 V18 H3 Z M15 10 L21 6 V18 L15 14" stroke="#410e0b" stroke-width="2" fill="none"/><path d="M2 3 L19 21" stroke="#410e0b" stroke-width="2"/></svg>

<div class="cb" style="left:442px;width:35px"></div>
<svg style="left:451px;top:502px" width="17" height="15" viewBox="0 0 17 15"><rect x="2" y="1" width="13" height="10" fill="none" stroke="#e3e3e3" stroke-width="1.5"/><path d="M0 13.5 H17" stroke="#e3e3e3" stroke-width="1.5"/><path d="M8.5 9 V4 M6 6 L8.5 3.5 L11 6" stroke="#e3e3e3" stroke-width="1.4" fill="none"/></svg>
<div class="cb" style="left:483px;width:36px"></div>
<svg style="left:493px;top:502px" width="16" height="16" viewBox="0 0 16 16"><circle cx="8" cy="8" r="6.5" fill="none" stroke="#e3e3e3" stroke-width="1.6"/><circle cx="5.6" cy="6.3" r="1" fill="#e3e3e3"/><circle cx="10.4" cy="6.3" r="1" fill="#e3e3e3"/><path d="M4.8 9 Q8 12.5 11.2 9 Z" fill="#e3e3e3"/></svg>
<div class="cb" style="left:525px;width:36px"></div>
<svg style="left:535px;top:503px" width="16" height="13" viewBox="0 0 16 13"><rect x="1" y="1" width="14" height="11" fill="none" stroke="#e3e3e3" stroke-width="1.6"/><path d="M7 5 H4.5 V8 H7 M11.5 5 H9 V8 H11.5" stroke="#e3e3e3" stroke-width="1.2" fill="none"/></svg>
<div class="cb" style="left:566px;width:36px"></div>
<svg style="left:576px;top:500px" width="16" height="18" viewBox="0 0 24 26"><path d="M7 14 V5 A1.5 1.5 0 0 1 10 5 V12 M10 12 V3 A1.5 1.5 0 0 1 13 3 V12 M13 12 V4 A1.5 1.5 0 0 1 16 4 V12 M16 12 V7 A1.5 1.5 0 0 1 19 7 V16 A8 8 0 0 1 11 24 A8 8 0 0 1 4 19 L1 14 A1.5 1.5 0 0 1 4 12.5 L7 15" stroke="#e3e3e3" stroke-width="2.2" fill="none" stroke-linejoin="round"/></svg>
<div class="cb" style="left:607.5px;width:23px"></div>
<svg style="left:617px;top:502px" width="4" height="15"><circle cx="2" cy="2" r="1.6" fill="#e3e3e3"/><circle cx="2" cy="7.5" r="1.6" fill="#e3e3e3"/><circle cx="2" cy="13" r="1.6" fill="#e3e3e3"/></svg>
<div class="a" style="left:636.5px;top:494.5px;width:47px;height:31px;background:#e2392d;border-radius:16px"></div>
<svg style="left:652px;top:506px" width="15" height="8" viewBox="0 0 15 8"><path d="M1 5.5 Q1 1 7.5 1 Q14 1 14 5.5 L11.5 6.5 L10.5 4.5 Q7.5 3.5 4.5 4.5 L3.5 6.5 Z" fill="#fff"/></svg>

<svg style="left:874px;top:502px" width="15" height="15" viewBox="0 0 15 15"><circle cx="7.5" cy="7.5" r="6.3" fill="none" stroke="#eee" stroke-width="1.6"/><path d="M7.5 6.5 V11" stroke="#eee" stroke-width="1.8"/><circle cx="7.5" cy="4.3" r="1" fill="#eee"/></svg>
<svg style="left:906px;top:502px" width="15" height="15" viewBox="0 0 15 15"><path d="M1 1 H14 V11 H4 L1 14 Z" fill="none" stroke="#eee" stroke-width="1.5" stroke-linejoin="round"/><path d="M4 4 H11 M4 6.3 H11 M4 8.6 H8.5" stroke="#eee" stroke-width="1.1"/></svg>
<svg style="left:938px;top:503px" width="13" height="13"><g fill="#eee"><circle cx="2" cy="2" r="1.5"/><circle cx="6.5" cy="2" r="1.5"/><circle cx="11" cy="2" r="1.5"/><circle cx="2" cy="6.5" r="1.5"/><circle cx="6.5" cy="6.5" r="1.5"/><circle cx="11" cy="6.5" r="1.5"/><circle cx="2" cy="11" r="1.5"/><circle cx="6.5" cy="11" r="1.5"/><circle cx="11" cy="11" r="1.5"/></g></svg>
<svg style="left:969px;top:501px" width="15" height="17" viewBox="0 0 15 17"><path d="M3.5 7 V4.5 A3.5 3.5 0 0 1 10.5 4.5 V7" fill="none" stroke="#eee" stroke-width="1.5"/><path d="M1.5 7 H12.5 V9 M9 15.5 H1.5 V7" fill="none" stroke="#eee" stroke-width="1.5"/><circle cx="11.5" cy="12.5" r="3.5" fill="#eee"/><path d="M11.5 10.8 V12.8 M11.5 14 V14.6" stroke="#131316" stroke-width="1.2"/></svg>

<!-- TASKBAR -->
<div id="taskbar" class="a"></div>
<svg style="left:11px;top:544px" width="11" height="11"><g fill="#fff"><path d="M0 1.5 L4.8 0.8 V5.2 H0 Z"/><path d="M5.5 0.7 L11 0 V5.2 H5.5 Z"/><path d="M0 5.9 H4.8 V10.3 L0 9.6 Z"/><path d="M5.5 5.9 H11 V11 L5.5 10.4 Z"/></g></svg>
<svg style="left:41px;top:543px" width="12" height="12"><circle cx="7.3" cy="4.7" r="3.7" fill="none" stroke="#ddd" stroke-width="1.1"/><path d="M4.6 7.4 L0.8 11.2" stroke="#ddd" stroke-width="1.2"/></svg>
<svg style="left:71px;top:544px" width="14" height="11"><rect x="3" y="0.5" width="8" height="10" rx="1" fill="none" stroke="#ccc" stroke-width="1"/><path d="M1 2 V9 M13 2 V9" stroke="#ccc" stroke-width="1"/></svg>
<svg style="left:103px;top:541px" width="16" height="15" viewBox="0 0 16 15"><rect x="5" y="1" width="10" height="13" fill="#f3b2a4"/><path d="M0 1.5 L9 0 V15 L0 13.5 Z" fill="#d24726"/><path d="M2.8 4 H5 Q7 4 7 6 Q7 8 5 8 H4 V11 H2.8 Z M4 5 V7 H5 Q5.9 7 5.9 6 Q5.9 5 5 5 Z" fill="#fff"/></svg>
<svg style="left:134px;top:540px" width="16" height="16" viewBox="0 0 16 16"><circle cx="8" cy="8.5" r="7" fill="#ff7139"/><circle cx="8.3" cy="9" r="4" fill="#6b2fd5"/><path d="M2 5 Q4 1 8 1.5 Q12 2 14 5 Q11 3 8.5 4 Q5 3.5 2 5 Z" fill="#ffbd2e"/></svg>
<svg style="left:167px;top:541px" width="16" height="15" viewBox="0 0 16 15"><rect x="6" y="1" width="9.5" height="13" fill="#fff" stroke="#1d7044" stroke-width="1"/><path d="M0 1.5 L9 0 V15 L0 13.5 Z" fill="#1d7044"/><path d="M2.5 4 L6.5 11 M6.5 4 L2.5 11" stroke="#fff" stroke-width="1.4"/><path d="M11 4 V11" stroke="#1d7044" stroke-width="1.2"/></svg>
<svg style="left:199px;top:540px" width="16" height="16" viewBox="0 0 16 16"><circle cx="8" cy="8" r="7.5" fill="#db4437"/><path d="M8 8 L1.5 4.3 A7.5 7.5 0 0 0 6 15.2 Z" fill="#0f9d58"/><path d="M8 8 L6 15.2 A7.5 7.5 0 0 0 14.5 4.3 Z" fill="#f4c20d"/><circle cx="8" cy="8" r="3.8" fill="#fff"/><circle cx="8" cy="8" r="2.9" fill="#4285f4"/></svg>
<svg style="left:232px;top:541px" width="16" height="14" viewBox="0 0 16 14"><path d="M0.5 1 H6 L7.5 2.5 H15.5 V13.5 H0.5 Z" fill="#e8b84a"/><rect x="0.5" y="4" width="15" height="9.5" fill="#f7d774"/><rect x="3" y="7" width="10" height="5" fill="#5aa0d8"/></svg>
<div class="a" style="left:256px;top:536px;width:33px;height:26px;background:#2a2b33"></div>
<div class="a" style="left:257px;top:560px;width:31px;height:2px;background:#9ec6ea"></div>
<svg style="left:264px;top:540px" width="17" height="17" viewBox="0 0 16 16"><circle cx="8" cy="8" r="7.5" fill="#db4437"/><path d="M8 8 L1.5 4.3 A7.5 7.5 0 0 0 6 15.2 Z" fill="#0f9d58"/><path d="M8 8 L6 15.2 A7.5 7.5 0 0 0 14.5 4.3 Z" fill="#f4c20d"/><circle cx="8" cy="8" r="3.8" fill="#fff"/><circle cx="8" cy="8" r="2.9" fill="#4285f4"/><circle cx="12.5" cy="12.5" r="3.5" fill="#0d4a3e"/></svg>
<svg style="left:297px;top:541px" width="16" height="15" viewBox="0 0 16 15"><rect x="6" y="1" width="9.5" height="13" fill="#fff" stroke="#2b579a" stroke-width="1"/><path d="M0 1.5 L9 0 V15 L0 13.5 Z" fill="#2b579a"/><path d="M1.5 4 L3 11 L4.5 6 L6 11 L7.5 4" stroke="#fff" stroke-width="1" fill="none"/></svg>
<div class="a" style="left:289px;top:560px;width:31px;height:2px;background:#9ec6ea"></div>

<svg style="left:838px;top:546px" width="10" height="6"><path d="M0.5 5.5 L5 1 L9.5 5.5" stroke="#ddd" stroke-width="1.1" fill="none"/></svg>
<svg style="left:852px;top:545px" width="13" height="9"><rect x="0" y="0" width="4" height="3" fill="#ddd"/><rect x="2" y="2" width="11" height="7" fill="#ddd"/></svg>
<svg style="left:869px;top:544px" width="12" height="11"><path d="M1 10 A9 9 0 0 1 10 1 M3.5 10 A6.5 6.5 0 0 1 10 3.5 M6 10 A4 4 0 0 1 10 6" stroke="#aaa" stroke-width="1" fill="none"/><circle cx="10" cy="10" r="1" fill="#ddd"/></svg>
<svg style="left:887px;top:543px" width="13" height="12"><path d="M0.5 4 H3 L6.5 1 V11 L3 8 H0.5 Z" fill="none" stroke="#ddd" stroke-width="1"/><path d="M8.5 4 Q9.8 6 8.5 8 M10.5 2.5 Q12.8 6 10.5 9.5" stroke="#ddd" stroke-width="1" fill="none"/></svg>
<div class="a" style="left:901.5px;top:544px;font-size:7.3px;color:#eee;line-height:10px">УКР</div>
<div class="a" style="left:933px;top:538.5px;font-size:7.3px;color:#eee;line-height:10px">10:12</div>
<div class="a" style="left:923.5px;top:550px;font-size:7.3px;color:#eee;line-height:10px">02.03.2026</div>
<svg style="left:972px;top:542px" width="16" height="15" viewBox="0 0 16 15"><path d="M0.5 0.5 H12.5 V9.5 H4 L2 11.5 V9.5 H0.5 Z" fill="#eee"/><path d="M2.5 3 H10.5 M2.5 5 H10.5 M2.5 7 H8" stroke="#03050b" stroke-width="0.8"/><circle cx="11.5" cy="11" r="3.5" fill="#03050b" stroke="#bbb" stroke-width="0.8"/><path d="M11.5 9.3 V12.8" stroke="#eee" stroke-width="0.9"/></svg>
<div class="a" style="left:994px;top:536px;width:1px;height:26px;background:#555"></div>
</body></html>
